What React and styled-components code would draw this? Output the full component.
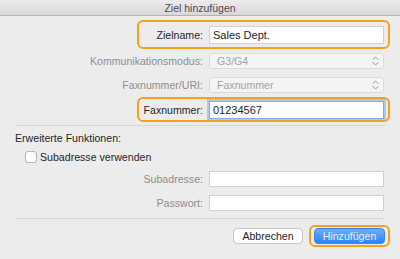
import React from "react";
import styled, { createGlobalStyle } from "styled-components";

const Global = createGlobalStyle`
  html, body { margin: 0; padding: 0; background: #ececec; }
  body { font-family: "Liberation Sans", Arial, sans-serif; }
`;

const Window = styled.div`
  width: 400px;
  height: 259px;
  background: #ececec;
  display: flex;
  flex-direction: column;
  overflow: hidden;
  font-size: 10.6px;
  color: #262626;
`;

const TitleBar = styled.div`
  height: 15px;
  border-bottom: 1px solid #b3b1b3;
  background: linear-gradient(#edebed, #d9d7d9);
  display: flex;
  align-items: center;
  justify-content: center;
  font-size: 10.5px;
  color: #4a4a4a;
`;

const Form = styled.div`
  display: flex;
  flex-direction: column;
  padding-top: 4px;
`;

const Row = styled.div`
  position: relative;
  display: grid;
  grid-template-columns: 204px 175px;
  column-gap: 5px;
  align-items: center;
  height: ${(p) => p.$h}px;
  margin-top: ${(p) => p.$mt || 0}px;
  &::before {
    content: "";
    display: ${(p) => (p.$highlight ? "block" : "none")};
    position: absolute;
    left: 137px;
    width: 253px;
    top: 0;
    bottom: 0;
    box-sizing: border-box;
    border: 2px solid #f4a11e;
    border-radius: 6px;
    pointer-events: none;
  }
`;

const Label = styled.label`
  text-align: right;
  padding-right: 1px;
  white-space: nowrap;
  color: ${(p) => (p.$disabled ? "#8e8e8e" : "#262626")};
`;

const TextInput = styled.div`
  box-sizing: border-box;
  height: ${(p) => (p.$tall ? 18 : 16)}px;
  background: #fff;
  border: 1px solid ${(p) => (p.$focus ? "#7eaeea" : "#d2d2d2")};
  box-shadow: ${(p) => (p.$focus ? "0 0 0 2px #a9c8f2" : "none")};
  padding-left: 3px;
  display: flex;
  align-items: center;
  color: #1e1e1e;
  font-size: ${(p) => (p.$tall ? 11 : 10.6)}px;
`;

const Select = styled.div`
  box-sizing: border-box;
  height: 16px;
  background: #f4f4f4;
  border: 1px solid #dcdcdc;
  border-radius: 3px;
  padding: 0 4px 0 7px;
  display: flex;
  align-items: center;
  justify-content: space-between;
  color: #a3a3a3;
`;

const Separator = styled.div`
  height: 1px;
  background: #d6d6d6;
  margin: ${(p) => p.$mt}px 15px 0 16px;
`;

const SectionTitle = styled.div`
  margin: 5px 0 0 15px;
  height: 14px;
  line-height: 14px;
`;

const CheckRow = styled.label`
  display: flex;
  align-items: center;
  gap: 3px;
  margin: 5px 0 0 25px;
  height: 14px;
`;

const Box = styled.span`
  box-sizing: border-box;
  width: 12px;
  height: 12px;
  background: #fff;
  border: 1px solid #b4b4b4;
  border-radius: 3px;
`;

const ButtonRow = styled.div`
  display: flex;
  justify-content: flex-end;
  align-items: center;
  gap: 6px;
  margin: 6px 10px 0 0;
  height: 22px;
`;

const Button = styled.button`
  box-sizing: border-box;
  height: 16px;
  width: ${(p) => p.$w}px;
  padding: 0;
  font-family: inherit;
  font-size: 10.6px;
  border-radius: 4px;
  border: 1px solid ${(p) => (p.$primary ? "#3d86f0" : "#c8c8c8")};
  background: ${(p) =>
    p.$primary ? "linear-gradient(#6cb0fb, #2b84f7)" : "#ffffff"};
  color: ${(p) => (p.$primary ? "#e6efff" : "#1e1e1e")};
  display: flex;
  align-items: center;
  justify-content: center;
`;

const FocusRing = styled.span`
  display: flex;
  box-sizing: border-box;
  border: 2px solid #f4a11e;
  border-radius: 6px;
  padding: 1px 3px;
`;

const Chevrons = () => (
  <svg width="7" height="10" viewBox="0 0 7 10" fill="none" stroke="#9a9a9a" strokeWidth="1" strokeLinecap="round" strokeLinejoin="round">
    <path d="M1 3.5 L3.5 1 L6 3.5" />
    <path d="M1 6.5 L3.5 9 L6 6.5" />
  </svg>
);

export default function App() {
  return (
    <>
      <Global />
      <Window>
        <TitleBar>Ziel hinzufügen</TitleBar>
        <Form>
          <Row $h={29} $highlight>
            <Label>Zielname:</Label>
            <TextInput $tall>Sales Dept.</TextInput>
          </Row>
          <Row $h={24}>
            <Label $disabled>Kommunikationsmodus:</Label>
            <Select>
              <span>G3/G4</span>
              <Chevrons />
            </Select>
          </Row>
          <Row $h={24}>
            <Label $disabled>Faxnummer/URI:</Label>
            <Select>
              <span>Faxnummer</span>
              <Chevrons />
            </Select>
          </Row>
          <Row $h={25} $highlight>
            <Label>Faxnummer:</Label>
            <TextInput $tall $focus>01234567</TextInput>
          </Row>
          <Separator $mt={3} />
          <SectionTitle>Erweiterte Funktionen:</SectionTitle>
          <CheckRow>
            <Box />
            <span>Subadresse verwenden</span>
          </CheckRow>
          <Row $h={24} $mt={3}>
            <Label $disabled>Subadresse:</Label>
            <TextInput />
          </Row>
          <Row $h={24}>
            <Label $disabled>Passwort:</Label>
            <TextInput />
          </Row>
          <Separator $mt={3} />
          <ButtonRow>
            <Button $w={70}>Abbrechen</Button>
            <FocusRing>
              <Button $w={71} $primary>Hinzufügen</Button>
            </FocusRing>
          </ButtonRow>
        </Form>
      </Window>
    </>
  );
}
